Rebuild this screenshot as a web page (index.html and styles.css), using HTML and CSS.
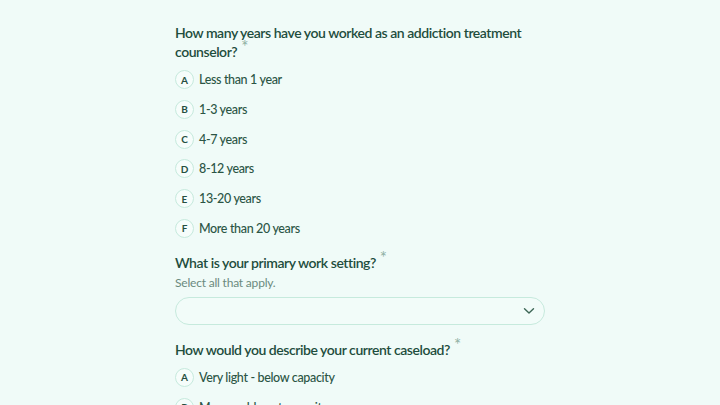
FILE: index.html
```html
<!DOCTYPE html>
<html lang="en">
<head>
<meta charset="utf-8">
<title>Survey</title>
<link rel="stylesheet" href="styles.css">
</head>
<body>
<main class="form">
  <section class="question">
    <h2 class="q-title">How many years have you worked as an addiction treatment counselor?<span class="req">*</span></h2>
    <ul class="options">
      <li class="option"><span class="key">A</span><span class="label">Less than 1 year</span></li>
      <li class="option"><span class="key">B</span><span class="label">1-3 years</span></li>
      <li class="option"><span class="key">C</span><span class="label">4-7 years</span></li>
      <li class="option"><span class="key">D</span><span class="label">8-12 years</span></li>
      <li class="option"><span class="key">E</span><span class="label">13-20 years</span></li>
      <li class="option"><span class="key">F</span><span class="label">More than 20 years</span></li>
    </ul>
  </section>
  <section class="question">
    <h2 class="q-title">What is your primary work setting?<span class="req">*</span></h2>
    <p class="hint">Select all that apply.</p>
    <div class="select">
      <svg class="chev" width="12" height="8" viewBox="0 0 12 8"><path d="M1.5 1.8 L6 6 L10.5 1.8" fill="none" stroke="#3d6656" stroke-width="1.4" stroke-linecap="round" stroke-linejoin="round"/></svg>
    </div>
  </section>
  <section class="question">
    <h2 class="q-title">How would you describe your current caseload?<span class="req">*</span></h2>
    <ul class="options">
      <li class="option"><span class="key">A</span><span class="label">Very light - below capacity</span></li>
      <li class="option"><span class="key">B</span><span class="label">Manageable - at capacity</span></li>
    </ul>
  </section>
</main>
</body>
</html>
```
FILE: styles.css
```css
html, body {
  margin: 0;
  padding: 0;
  background: #f0fbf8;
  overflow: hidden;
  height: 405px;
}
body {
  font-family: "Lato", "Inter", sans-serif;
  color: #1e4d3d;
}
.form {
  width: 370px;
  margin: 0 auto;
  padding-top: 23px;
  display: flex;
  flex-direction: column;
  gap: 15px;
}
.question {
  display: flex;
  flex-direction: column;
}
.q-title {
  margin: 0;
  font-size: 14px;
  font-weight: 600;
  line-height: 19px;
  color: #1e4d3d;
  letter-spacing: -0.45px;
}
.req {
  color: #8fb0a3;
  font-weight: 400;
  font-size: 17px;
  line-height: 0;
  vertical-align: 4px;
  margin-left: 4px;
}
.options {
  list-style: none;
  margin: 9px 0 0;
  padding: 0;
  display: flex;
  flex-direction: column;
  gap: 10.8px;
}
.option {
  display: flex;
  align-items: center;
  gap: 5px;
  height: 19px;
}
.key {
  box-sizing: border-box;
  width: 19px;
  height: 19px;
  flex: none;
  border: 1px solid #c6eadd;
  border-radius: 50%;
  background: #f6fdfb;
  display: flex;
  align-items: center;
  justify-content: center;
  font-size: 10px;
  font-weight: 700;
  color: #264f41;
}
.label {
  font-size: 12.5px;
  font-weight: 500;
  letter-spacing: -0.35px;
  color: #2b5545;
}
.hint {
  margin: 3px 0 0;
  font-size: 12px;
  line-height: 16px;
  letter-spacing: -0.2px;
  color: #6b8a7e;
}
.select {
  box-sizing: border-box;
  margin-top: 6px;
  height: 28px;
  border: 1px solid #c6eadd;
  border-radius: 14px;
  background: #f2fcf9;
  display: flex;
  align-items: center;
  justify-content: flex-end;
  padding-right: 9px;
}
```
